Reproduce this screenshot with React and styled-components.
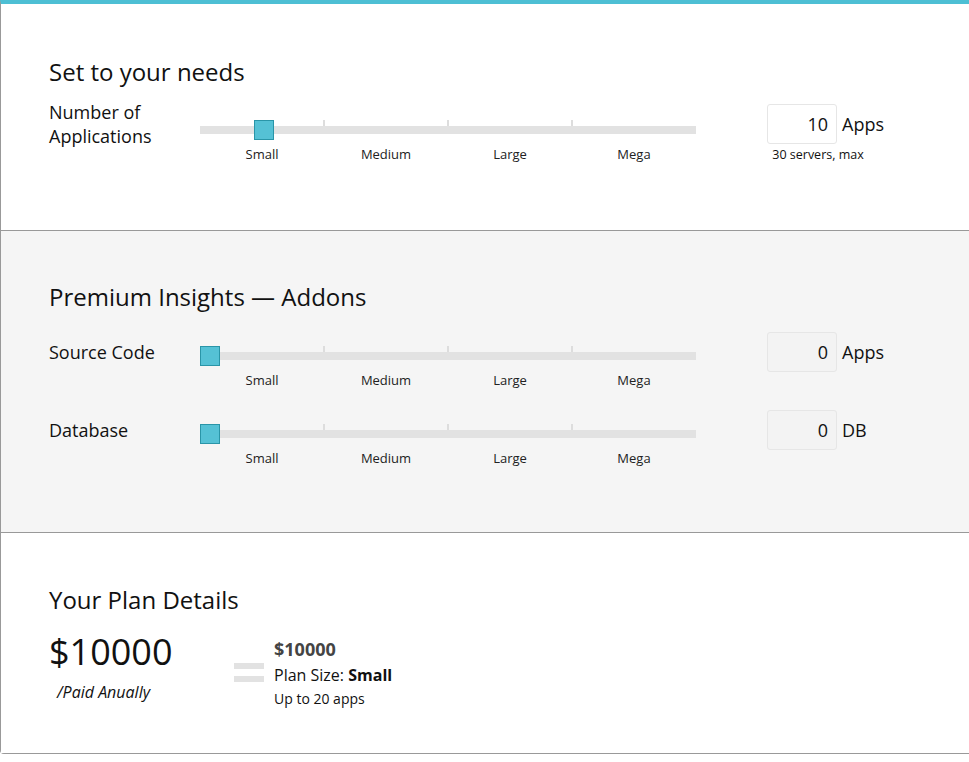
import styled, { createGlobalStyle } from "styled-components";

const Global = createGlobalStyle`
  body { margin: 0; background: #fff; font-family: "Open Sans", "Liberation Sans", sans-serif; color: #111; }
`;

const Card = styled.div`
  border-top: 4px solid #4dbfd4;
  border-left: 1px solid #999;
  border-bottom: 1px solid #999;
  border-bottom-left-radius: 4px;
  height: 754px;
  box-sizing: border-box;
  display: flex;
  flex-direction: column;
`;

const Section = styled.section`
  background: ${(p) => (p.$grey ? "#f5f5f5" : "#fff")};
  border-bottom: ${(p) => (p.$last ? "none" : "1px solid #999")};
  height: ${(p) => p.$h}px;
  padding: ${(p) => p.$pt}px 0 0 48px;
  box-sizing: border-box;
`;

const Heading = styled.h2`
  margin: 0 0 ${(p) => p.$mb || 8}px;
  font-size: 24px;
  font-weight: 400;
  line-height: 34px;
`;

const Row = styled.div`
  display: grid;
  grid-template-columns: 151px 496px 71px auto;
  align-items: start;
  margin-bottom: ${(p) => p.$mb || 0}px;
`;

const Label = styled.div`
  font-size: 18px;
  line-height: 24px;
  padding-top: ${(p) => p.$pt || 0}px;
`;

const Slider = styled.div`
  padding-top: ${(p) => p.$pt}px;
`;

const Track = styled.div`
  position: relative;
  height: 8px;
  background: #e2e2e2;
`;

const Tick = styled.span`
  position: absolute;
  top: -6px;
  width: 2px;
  height: 6px;
  background: #ddd;
`;

const Thumb = styled.span`
  position: absolute;
  top: -6px;
  width: 18px;
  height: 18px;
  background: #55c1d5;
  border: 1px solid #2a95a8;
`;

const Steps = styled.div`
  display: grid;
  grid-template-columns: repeat(4, 1fr);
  margin-top: 11px;
  font-size: 13px;
  text-align: center;
  color: #222;
`;

const Field = styled.div`
  display: flex;
  flex-direction: column;
  align-items: center;
  grid-column: 4;
  width: 112px;
  margin-top: ${(p) => p.$mt || 0}px;
`;

const FieldLine = styled.div`
  display: flex;
  align-items: center;
  gap: 5px;
  align-self: flex-start;
  font-size: 18px;
`;

const Box = styled.div`
  width: 70px;
  height: 40px;
  box-sizing: border-box;
  border: 1px solid #e6e6e6;
  border-radius: 3px;
  background: ${(p) => (p.$grey ? "#f3f3f3" : "#fff")};
  display: flex;
  align-items: center;
  justify-content: flex-end;
  padding-right: 8px;
  font-size: 18px;
`;

const Note = styled.div`
  font-size: 12.5px;
  margin-top: 2px;
  margin-left: -10px;
`;

const Plan = styled.div`
  display: flex;
  align-items: flex-start;
`;

const Price = styled.div`
  width: 185px;
  font-size: 36px;
  line-height: 44px;
  span {
    display: block;
    font-size: 16px;
    font-style: italic;
    line-height: 24px;
    margin: 6px 0 0 8px;
  }
`;

const Equals = styled.div`
  width: 30px;
  margin: 33px 10px 0 0;
  display: flex;
  flex-direction: column;
  gap: 7px;
  i { height: 6px; background: #e2e2e2; }
`;

const Details = styled.div`
  color: #111;
  padding-top: 6px;
  b { font-weight: 700; }
`;

const Amount = styled.div`
  font-size: 18px;
  font-weight: 700;
  color: #444;
  line-height: 26px;
`;

const Size = styled.div`font-size: 16px; line-height: 26px;`;
const Small = styled.div`font-size: 14px; line-height: 22px;`;

const steps = ["Small", "Medium", "Large", "Mega"];

function Range({ pos, pt }) {
  return (
    <Slider $pt={pt}>
      <Track>
        {[1, 2, 3].map((i) => (
          <Tick key={i} style={{ left: i * 124 - 1 }} />
        ))}
        <Thumb style={{ left: pos }} />
      </Track>
      <Steps>
        {steps.map((s) => (
          <div key={s}>{s}</div>
        ))}
      </Steps>
    </Slider>
  );
}

export default function App() {
  return (
    <>
      <Global />
      <Card>
        <Section $h={227} $pt={51}>
          <Heading $mb={0}>Set to your needs</Heading>
          <Row>
            <Label $pt={3}>Number of<br />Applications</Label>
            <Range pos={54} pt={29} />
            <span />
            <Field $mt={7}>
              <FieldLine><Box>10</Box>Apps</FieldLine>
              <Note>30 servers, max</Note>
            </Field>
          </Row>
        </Section>
        <Section $grey $h={303} $pt={49}>
          <Heading $mb={18}>Premium Insights — Addons</Heading>
          <Row $mb={21}>
            <Label $pt={8}>Source Code</Label>
            <Range pos={0} pt={20} />
            <span />
            <Field><FieldLine><Box $grey>0</Box>Apps</FieldLine></Field>
          </Row>
          <Row>
            <Label $pt={8}>Database</Label>
            <Range pos={0} pt={20} />
            <span />
            <Field><FieldLine><Box $grey>0</Box>DB</FieldLine></Field>
          </Row>
        </Section>
        <Section $last $h={220} $pt={50}>
          <Heading $mb={13}>Your Plan Details</Heading>
          <Plan>
            <Price>$10000<span>/Paid Anually</span></Price>
            <Equals><i /><i /></Equals>
            <Details>
              <Amount>$10000</Amount>
              <Size>Plan Size: <b>Small</b></Size>
              <Small>Up to 20 apps</Small>
            </Details>
          </Plan>
        </Section>
      </Card>
    </>
  );
}
